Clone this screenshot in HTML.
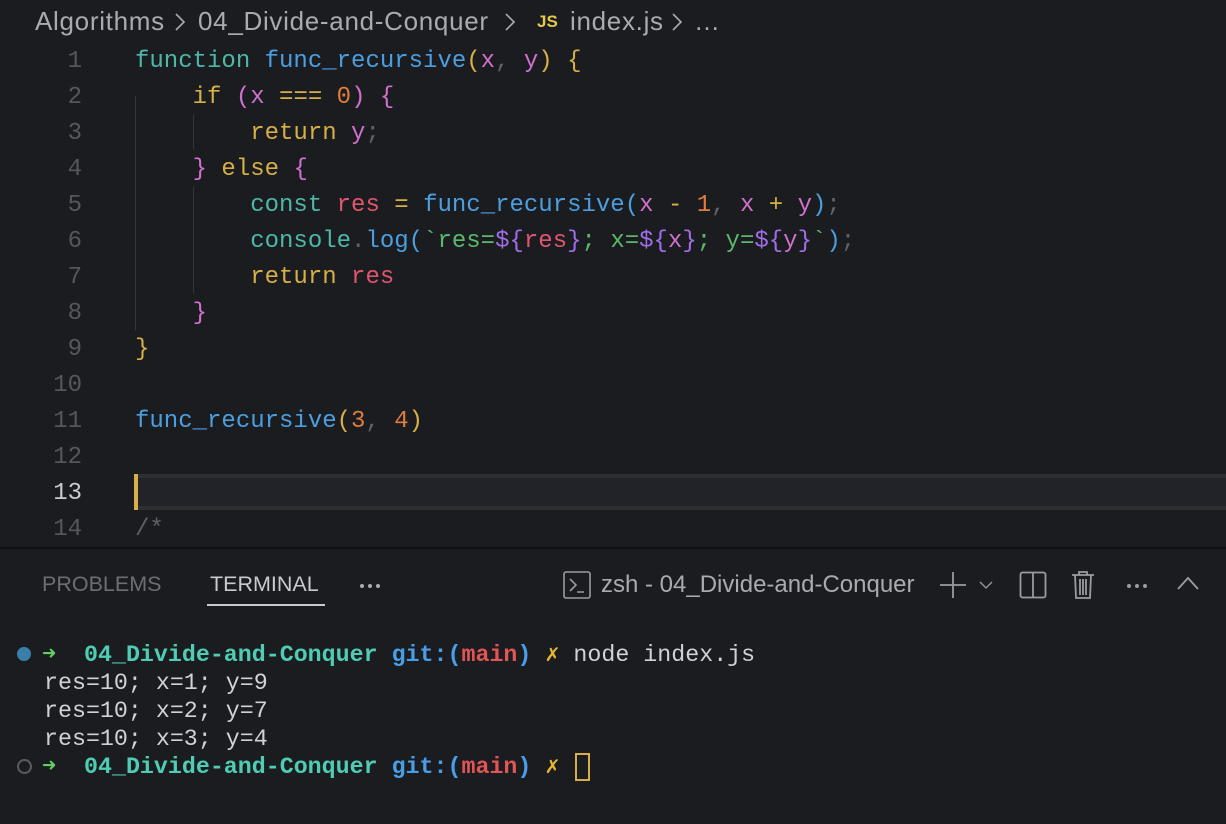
<!DOCTYPE html>
<html><head><meta charset="utf-8"><style>
body{margin:0;width:1226px;height:824px;background:#1b1c20;overflow:hidden;font-family:"Liberation Sans",sans-serif;position:relative}
.bc{position:absolute;top:6px;font-size:26px;color:#a9abb1;white-space:pre;letter-spacing:0.7px}
.js{color:#e6c84a;font-weight:bold;font-size:17px;position:absolute;top:12px;left:537px}
.chv{position:absolute;top:13px}
.code{position:absolute;left:0;top:44px;font-family:"Liberation Mono",monospace;font-size:24px}
.ln{position:absolute;left:0;width:82px;text-align:right;color:#54575e;height:36px;line-height:36px}
.tx{position:absolute;left:135px;height:36px;line-height:36px;white-space:pre;color:#c8cbd0}
.k{color:#d6b046}.t{color:#4cb8a8}.f{color:#4b9fe0}.p{color:#d070cf}.n{color:#e07c3c}.v{color:#e0566f}.s{color:#5bb86c}.d{color:#a06de8}.g{color:#5f6268}.pb{color:#d070cf}
.guide{position:absolute;width:1px;background:#34363c}
.cur{position:absolute;left:134px;top:474px;width:1092px;height:36px;box-sizing:border-box;border-top:4px solid #2e2f34;border-bottom:4px solid #2e2f34;background:#222328}
.caret{position:absolute;left:134px;top:474px;width:4px;height:36px;background:#d6b046}
.sep{position:absolute;left:0;top:547px;width:1226px;height:2px;background:#111215}
.tab{position:absolute;top:572px;font-size:21.5px;color:#6b6e75}
.dots{position:absolute;top:584px;width:4px;height:4px;border-radius:50%;background:#a9abb1;box-shadow:8px 0 0 #a9abb1,16px 0 0 #a9abb1}
.term{position:absolute;left:44px;font-family:"Liberation Mono",monospace;font-size:23.3px;white-space:pre;color:#d0d2d6;line-height:28px}
.tg{color:#4fcdb4;font-weight:bold}.tb{color:#4a9ee8;font-weight:bold}.tr{color:#e05555;font-weight:bold}.ty{color:#e6b830}.ta{color:#5fcf5f;font-weight:bold}
</style></head><body>
<div class="bc" style="left:35px">Algorithms</div>
<svg class="chv" style="left:174px" width="12" height="18" fill="none" stroke="#a9abb1" stroke-width="1.6"><path d="M2 1l8 8-8 8"/></svg>
<div class="bc" style="left:198px">04_Divide-and-Conquer</div>
<svg class="chv" style="left:504px" width="12" height="18" fill="none" stroke="#a9abb1" stroke-width="1.6"><path d="M2 1l8 8-8 8"/></svg>
<div class="js">JS</div>
<div class="bc" style="left:570px">index.js</div>
<svg class="chv" style="left:671px" width="12" height="18" fill="none" stroke="#a9abb1" stroke-width="1.6"><path d="M2 1l8 8-8 8"/></svg>
<div class="bc" style="left:694px">…</div>
<div class="cur"></div><div class="caret"></div>
<div class="guide" style="left:135px;top:96px;height:234px"></div>
<div class="guide" style="left:193px;top:114px;height:36px"></div>
<div class="guide" style="left:193px;top:186px;height:108px"></div>
<div class="code">
<div class="ln" style="top:0">1</div><div class="tx" style="top:0"><span class="t">function</span> <span class="f">func_recursive</span><span class="k">(</span><span class="p">x</span><span class="g">,</span> <span class="p">y</span><span class="k">)</span> <span class="k">{</span></div>
<div class="ln" style="top:36px">2</div><div class="tx" style="top:36px">    <span class="k">if</span> <span class="pb">(</span><span class="p">x</span> <span class="k">===</span> <span class="n">0</span><span class="pb">)</span> <span class="pb">{</span></div>
<div class="ln" style="top:72px">3</div><div class="tx" style="top:72px">        <span class="k">return</span> <span class="p">y</span><span class="g">;</span></div>
<div class="ln" style="top:108px">4</div><div class="tx" style="top:108px">    <span class="pb">}</span> <span class="k">else</span> <span class="pb">{</span></div>
<div class="ln" style="top:144px">5</div><div class="tx" style="top:144px">        <span class="t">const</span> <span class="v">res</span> <span class="k">=</span> <span class="f">func_recursive</span><span class="f">(</span><span class="p">x</span> <span class="k">-</span> <span class="n">1</span><span class="g">,</span> <span class="p">x</span> <span class="k">+</span> <span class="p">y</span><span class="f">)</span><span class="g">;</span></div>
<div class="ln" style="top:180px">6</div><div class="tx" style="top:180px">        <span class="t">console</span><span class="g">.</span><span class="f">log(</span><span class="s">`res=</span><span class="d">${</span><span class="v">res</span><span class="d">}</span><span class="s">; x=</span><span class="d">${</span><span class="p">x</span><span class="d">}</span><span class="s">; y=</span><span class="d">${</span><span class="p">y</span><span class="d">}</span><span class="s">`</span><span class="f">)</span><span class="g">;</span></div>
<div class="ln" style="top:216px">7</div><div class="tx" style="top:216px">        <span class="k">return</span> <span class="v">res</span></div>
<div class="ln" style="top:252px">8</div><div class="tx" style="top:252px">    <span class="pb">}</span></div>
<div class="ln" style="top:288px">9</div><div class="tx" style="top:288px"><span class="k">}</span></div>
<div class="ln" style="top:324px">10</div>
<div class="ln" style="top:360px">11</div><div class="tx" style="top:360px"><span class="f">func_recursive</span><span class="k">(</span><span class="n">3</span><span class="g">,</span> <span class="n">4</span><span class="k">)</span></div>
<div class="ln" style="top:396px">12</div>
<div class="ln" style="top:432px;color:#c8cbd0">13</div>
<div class="ln" style="top:468px">14</div><div class="tx" style="top:468px;color:#5f6268">/*</div>
</div>
<div class="sep"></div>
<div class="tab" style="left:42px">PROBLEMS</div>
<div class="tab" style="left:210px;color:#c8cacf">TERMINAL</div>
<div style="position:absolute;left:207px;top:604px;width:118px;height:2px;background:#c8cacf"></div>
<div class="dots" style="left:360px"></div>
<svg style="position:absolute;left:563px;top:571px" width="28" height="28" viewBox="0 0 28 28" fill="none" stroke="#9a9ca2" stroke-width="1.6"><rect x="1" y="1" width="26" height="26" rx="2"/><path d="M7 8l6 6-6 6M14 21h7"/></svg>
<div class="tab" style="left:601px;color:#a9abb1;font-size:24px;top:571px">zsh - 04_Divide-and-Conquer</div>
<svg style="position:absolute;left:938px;top:571px" width="60" height="28" fill="none" stroke="#9a9ca2" stroke-width="1.8"><path d="M15 1v26M2 14h26"/><path d="M42 11l6 6 6-6" stroke-width="1.3"/></svg>
<svg style="position:absolute;left:1019px;top:571px" width="28" height="28" fill="none" stroke="#9a9ca2" stroke-width="1.8"><rect x="1.5" y="1.5" width="25" height="25" rx="2"/><path d="M14 1.5v25"/></svg>
<svg style="position:absolute;left:1071px;top:570px" width="24" height="30" fill="none" stroke="#9a9ca2" stroke-width="1.8"><path d="M1 5h22M8 5V2h8v3M4 5l1 23h14l1-23M9 9v16M12 9v16M15 9v16"/></svg>
<div class="dots" style="left:1127px;background:#9a9ca2;box-shadow:8px 0 0 #9a9ca2,16px 0 0 #9a9ca2"></div>
<svg style="position:absolute;left:1176px;top:575px" width="24" height="16" fill="none" stroke="#9a9ca2" stroke-width="1.8"><path d="M2 14L12 3l10 11"/></svg>
<div style="position:absolute;left:17px;top:647px;width:14px;height:14px;border-radius:50%;background:#3a7fa8"></div>
<div style="position:absolute;left:17px;top:759px;width:11px;height:11px;border-radius:50%;border:2px solid #5a5c62"></div>
<div class="term" style="top:641px;left:42px"><span class="ta">➜</span>  <span class="tg">04_Divide-and-Conquer</span> <span class="tb">git:(</span><span class="tr">main</span><span class="tb">)</span> <span class="ty">✗</span> node index.js</div>
<div class="term" style="top:669px">res=10; x=1; y=9</div>
<div class="term" style="top:697px">res=10; x=2; y=7</div>
<div class="term" style="top:725px">res=10; x=3; y=4</div>
<div class="term" style="top:753px;left:42px"><span class="ta">➜</span>  <span class="tg">04_Divide-and-Conquer</span> <span class="tb">git:(</span><span class="tr">main</span><span class="tb">)</span> <span class="ty">✗</span></div>
<div style="position:absolute;left:575px;top:753px;width:11px;height:24px;border:2px solid #d6b046"></div>
</body></html>
